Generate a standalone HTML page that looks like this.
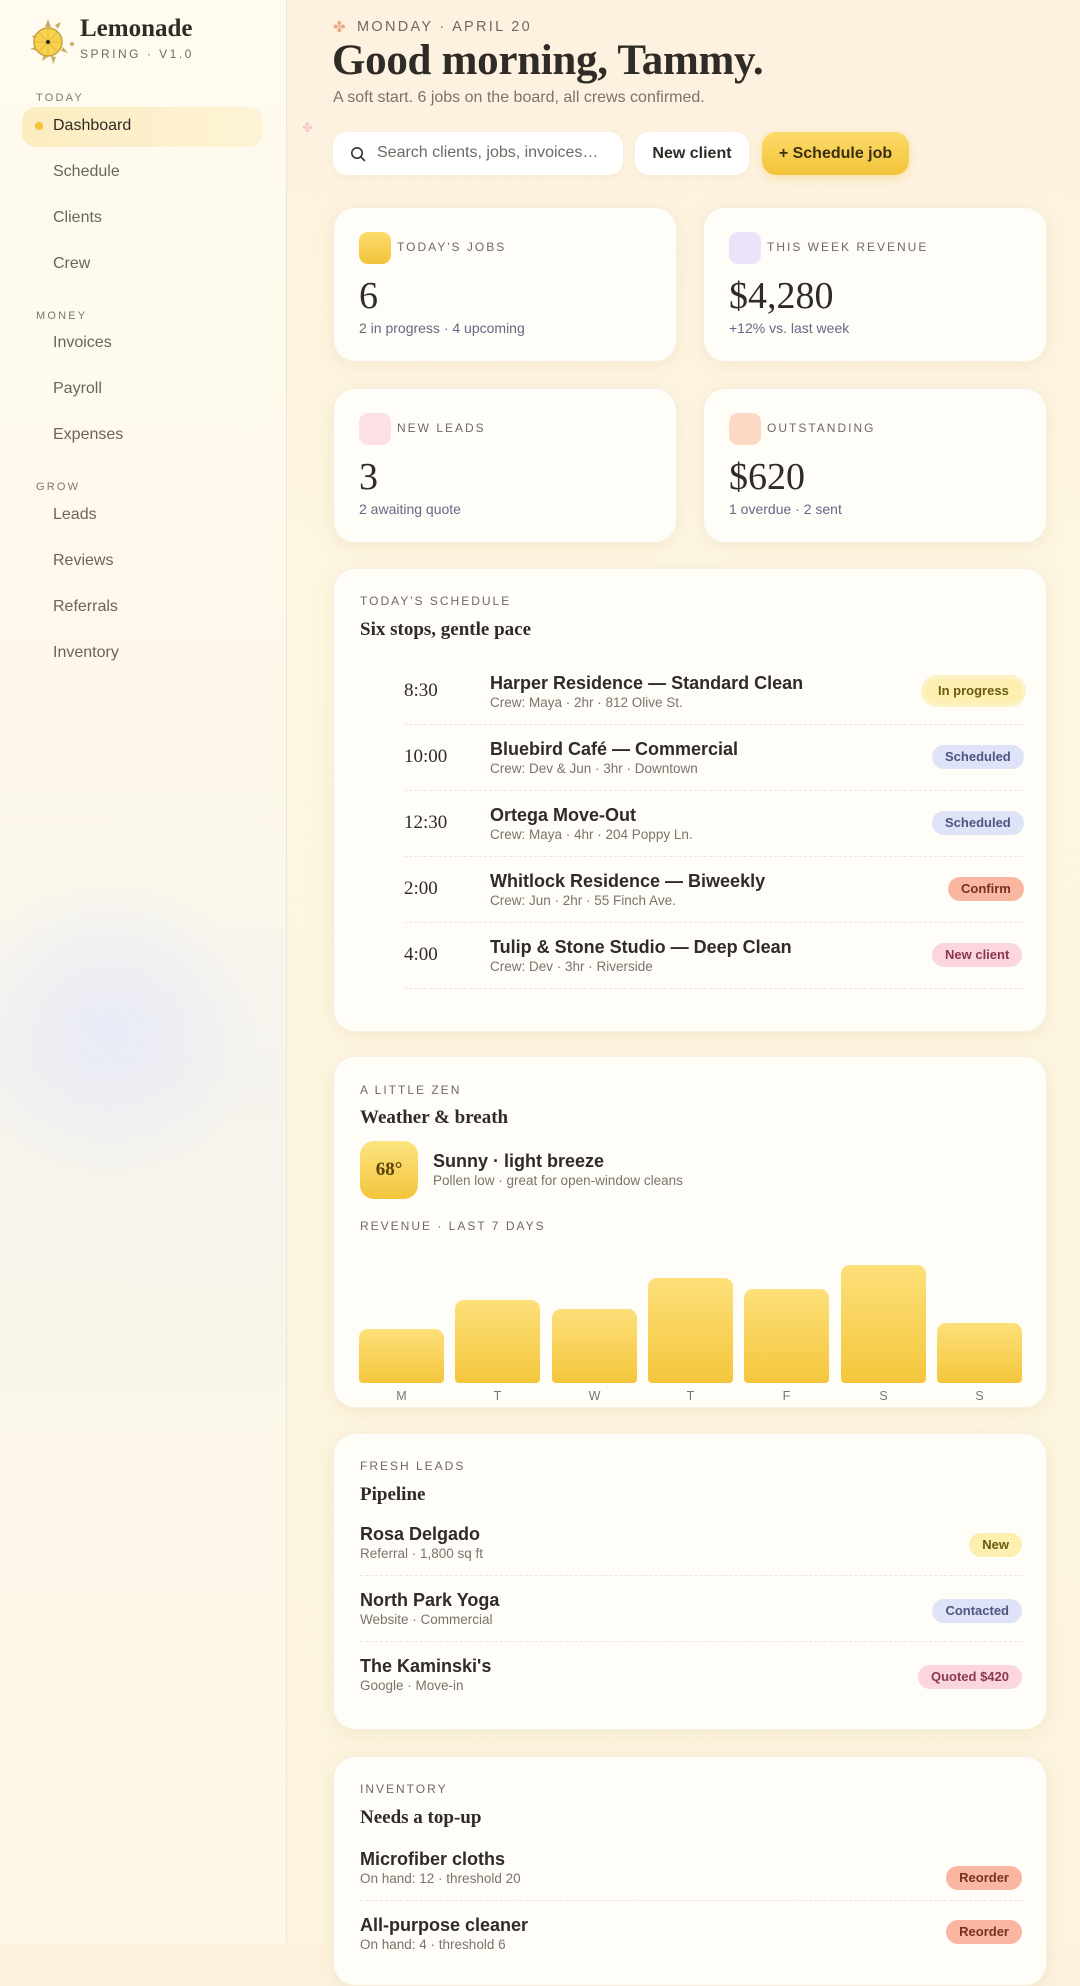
<!DOCTYPE html>
<html><head><meta charset="utf-8"><style>
*{box-sizing:border-box;margin:0;padding:0}
body{width:1080px;height:1943px;overflow:hidden;font-family:"Liberation Sans",sans-serif;color:#2f2b26;background:linear-gradient(180deg,#fdf1df 0%,#fdf6e2 30%,#fcf4de 100%);position:relative}
.side{position:absolute;left:0;top:0;width:287px;height:1943px;background:linear-gradient(180deg,#fffbee 0%,#fdf8ea 40%,#f5f3ee 55%,#fbf6e8 75%,#fdf7e6 100%);border-right:1px solid #f0e6cf}
.blob{position:absolute;left:-40px;top:880px;width:300px;height:300px;border-radius:50%;background:radial-gradient(circle,rgba(228,232,250,.8),rgba(228,232,250,0) 70%)}
.serif{font-family:"Liberation Serif",serif}
.abs{position:absolute}
.sec{position:absolute;left:36px;font-size:11px;letter-spacing:2.2px;color:#7d776c}
.nav{position:absolute;left:53px;font-size:16px;color:#6a645b;line-height:20px}
.card{position:absolute;left:333px;width:714px;background:#fffdf8;border-radius:22px;box-shadow:0 4px 16px rgba(220,200,150,.25);border:1px solid #f6efdf}
.lbl{position:absolute;left:26px;font-size:12px;letter-spacing:2px;color:#6f6a62}
.ttl{position:absolute;left:26px;font-family:"Liberation Serif",serif;font-weight:bold;font-size:19px;color:#2f2b26}
.badge{position:absolute;right:24px;height:24px;line-height:24px;padding:0 13px;border-radius:12px;font-size:13px;font-weight:bold}
.y{background:#fcefb0;color:#6b5a10}.b{background:#dfe3f7;color:#4d5680}.r{background:#f9b7a2;color:#7a2f20}.p{background:#fbd6df;color:#8a3850}
.row{position:absolute;left:26px;right:24px}
.rt{font-size:18px;font-weight:bold;color:#2f2b26;line-height:22px}
.rs{font-size:13.5px;color:#7a746b;line-height:17px}
.sep{position:absolute;height:0;border-top:1px dashed #ece6d8}
.stat{position:absolute;width:344px;height:155px;background:#fffdf8;border-radius:22px;box-shadow:0 4px 16px rgba(220,200,150,.25);border:1px solid #f6efdf}
.ic{position:absolute;left:25px;top:24px;width:32px;height:32px;border-radius:9px}
.sl{position:absolute;left:63px;top:32px;font-size:12px;letter-spacing:2px;color:#6f6a62}
.sv{position:absolute;left:25px;top:66px;font-family:"Liberation Serif",serif;font-size:38px;color:#2f2b26}
.ss{position:absolute;left:25px;top:112px;font-size:14px;color:#6b6585}
.bar{position:absolute;bottom:0;width:85px;border-radius:9px 9px 4px 4px;background:linear-gradient(180deg,#fde07a,#f4c63c)}
.dl{position:absolute;top:1389px;width:85px;text-align:center;font-size:12.5px;color:#777}
</style></head><body>
<div class="side"><div class="blob"></div>
<svg class="abs" style="left:28px;top:17px" width="50" height="50" viewBox="0 0 50 50">
<g fill="#c9ad6c"><polygon points="20,2 23,10 17,10"/><polygon points="33,5 30,12 27,8"/><polygon points="3,19 11,18 10,23"/><polygon points="2,32 10,29 10,34"/><polygon points="14,44 16,36 20,40"/><polygon points="25,47 23,39 28,40"/><polygon points="40,36 33,34 35,30"/></g>
<circle cx="20" cy="25" r="14" fill="#f6d24f" stroke="#c6a23a" stroke-width="1.5"/>
<g stroke="#e6b93a" stroke-width="1"><line x1="20" y1="12" x2="20" y2="38"/><line x1="7" y1="25" x2="33" y2="25"/><line x1="11" y1="16" x2="29" y2="34"/><line x1="29" y1="16" x2="11" y2="34"/></g>
<circle cx="20" cy="25" r="2" fill="#2f2b26"/><circle cx="44" cy="27" r="2" fill="#c9ad6c"/></svg>
<div class="abs serif" style="left:80px;top:15px;font-size:25px;font-weight:bold;color:#2f2b26">Lemonade</div>
<div class="abs" style="left:80px;top:47px;font-size:12px;letter-spacing:2.5px;color:#6f6a62">SPRING · V1.0</div>
<div class="sec" style="top:92px">TODAY</div>
<div class="abs" style="left:22px;top:107px;width:241px;height:40px;border-radius:14px;background:linear-gradient(90deg,#fcecc0,#fdf3d6)"></div>
<div class="abs" style="left:35px;top:122px;width:8px;height:8px;border-radius:50%;background:#f2c335"></div>
<div class="nav" style="top:116px;color:#2f2b26">Dashboard</div>
<div class="nav" style="top:162px">Schedule</div>
<div class="nav" style="top:208px">Clients</div>
<div class="nav" style="top:254px">Crew</div>
<div class="sec" style="top:310px">MONEY</div>
<div class="nav" style="top:333px">Invoices</div>
<div class="nav" style="top:379px">Payroll</div>
<div class="nav" style="top:425px">Expenses</div>
<div class="sec" style="top:481px">GROW</div>
<div class="nav" style="top:505px">Leads</div>
<div class="nav" style="top:551px">Reviews</div>
<div class="nav" style="top:597px">Referrals</div>
<div class="nav" style="top:643px">Inventory</div>
</div>

<div class="abs" style="left:333px;top:18px;font-size:15px;color:#eaa98a">✤</div>
<div class="abs" style="left:357px;top:19px;font-size:14.5px;letter-spacing:2.3px;color:#6f6a62">MONDAY · APRIL 20</div>
<div class="abs" style="left:302px;top:120px;font-size:13px;color:#f4c8c8">✤</div>
<div class="abs serif" style="left:332px;top:36px;font-size:43px;font-weight:bold;color:#2f2b26;letter-spacing:-.3px">Good morning, Tammy.</div>
<div class="abs" style="left:333px;top:89px;font-size:16px;color:#7a746b">A soft start. 6 jobs on the board, all crews confirmed.</div>

<div class="abs" style="left:333px;top:132px;width:290px;height:43px;border-radius:14px;background:#fff;box-shadow:0 2px 8px rgba(220,200,150,.2)">
<svg class="abs" style="left:17px;top:14px" width="16" height="16" viewBox="0 0 16 16"><circle cx="7" cy="7" r="5.2" fill="none" stroke="#333" stroke-width="1.6"/><line x1="11" y1="11" x2="14.5" y2="14.5" stroke="#333" stroke-width="1.6" stroke-linecap="round"/></svg>
<div class="abs" style="left:44px;top:12px;font-size:16px;color:#6f6a62">Search clients, jobs, invoices…</div></div>
<div class="abs" style="left:635px;top:132px;width:114px;height:43px;border-radius:14px;background:#fff;box-shadow:0 2px 8px rgba(220,200,150,.2);text-align:center;line-height:43px;font-size:16px;font-weight:bold;color:#2f2b26">New client</div>
<div class="abs" style="left:762px;top:132px;width:147px;height:43px;border-radius:14px;background:linear-gradient(180deg,#fcdb6a,#f3c33a);box-shadow:0 3px 10px rgba(240,190,60,.35);text-align:center;line-height:43px;font-size:16px;font-weight:bold;color:#3a2f10">+ Schedule job</div>

<div class="stat" style="left:333px;top:207px"><div class="ic" style="background:linear-gradient(180deg,#fcdc6c,#f3c23a)"></div><div class="sl">TODAY'S JOBS</div><div class="sv">6</div><div class="ss">2 in progress · 4 upcoming</div></div>
<div class="stat" style="left:703px;top:207px"><div class="ic" style="background:#ebe3f8"></div><div class="sl">THIS WEEK REVENUE</div><div class="sv">$4,280</div><div class="ss">+12% vs. last week</div></div>
<div class="stat" style="left:333px;top:388px"><div class="ic" style="background:#fde0e6"></div><div class="sl">NEW LEADS</div><div class="sv">3</div><div class="ss">2 awaiting quote</div></div>
<div class="stat" style="left:703px;top:388px"><div class="ic" style="background:#fdd8c2"></div><div class="sl">OUTSTANDING</div><div class="sv">$620</div><div class="ss">1 overdue · 2 sent</div></div>

<div class="card" style="top:568px;height:464px">
<div class="lbl" style="top:25px">TODAY'S SCHEDULE</div>
<div class="ttl" style="top:50px">Six stops, gentle pace</div>
</div>
<div id="sched"></div>
<!-- schedule rows -->
<div class="abs serif" style="left:404px;top:680px;font-size:19px">8:30</div>
<div class="abs" style="left:490px;top:672px"><div class="rt">Harper Residence — Standard Clean</div><div class="rs">Crew: Maya · 2hr · 812 Olive St.</div></div>
<div class="badge y abs" style="left:925px;right:auto;top:679px;box-shadow:0 0 0 4px #fdf2c6">In progress</div>
<div class="sep" style="left:404px;width:618px;top:724px"></div>
<div class="abs serif" style="left:404px;top:746px;font-size:19px">10:00</div>
<div class="abs" style="left:490px;top:738px"><div class="rt">Bluebird Café — Commercial</div><div class="rs">Crew: Dev &amp; Jun · 3hr · Downtown</div></div>
<div class="badge b abs" style="left:932px;right:auto;top:745px">Scheduled</div>
<div class="sep" style="left:404px;width:618px;top:790px"></div>
<div class="abs serif" style="left:404px;top:812px;font-size:19px">12:30</div>
<div class="abs" style="left:490px;top:804px"><div class="rt">Ortega Move-Out</div><div class="rs">Crew: Maya · 4hr · 204 Poppy Ln.</div></div>
<div class="badge b abs" style="left:932px;right:auto;top:811px">Scheduled</div>
<div class="sep" style="left:404px;width:618px;top:856px"></div>
<div class="abs serif" style="left:404px;top:878px;font-size:19px">2:00</div>
<div class="abs" style="left:490px;top:870px"><div class="rt">Whitlock Residence — Biweekly</div><div class="rs">Crew: Jun · 2hr · 55 Finch Ave.</div></div>
<div class="badge r abs" style="left:948px;right:auto;top:877px">Confirm</div>
<div class="sep" style="left:404px;width:618px;top:922px"></div>
<div class="abs serif" style="left:404px;top:944px;font-size:19px">4:00</div>
<div class="abs" style="left:490px;top:936px"><div class="rt">Tulip &amp; Stone Studio — Deep Clean</div><div class="rs">Crew: Dev · 3hr · Riverside</div></div>
<div class="badge p abs" style="left:932px;right:auto;top:943px">New client</div>
<div class="sep" style="left:404px;width:618px;top:988px"></div>

<div class="card" style="top:1056px;height:352px">
<div class="lbl" style="top:26px">A LITTLE ZEN</div>
<div class="ttl" style="top:50px">Weather &amp; breath</div>
<div class="abs serif" style="left:26px;top:84px;width:58px;height:58px;border-radius:14px;background:linear-gradient(180deg,#fde480,#f3c53c);text-align:center;line-height:58px;font-size:19px;font-weight:bold;color:#5a4208">68°</div>
<div class="abs" style="left:99px;top:94px;font-size:18px;font-weight:bold">Sunny · light breeze</div>
<div class="abs" style="left:99px;top:116px;font-size:13.5px;color:#7a746b">Pollen low · great for open-window cleans</div>
<div class="lbl" style="top:162px">REVENUE · LAST 7 DAYS</div>
</div>
<div class="abs" style="left:359px;top:1200px;width:663px;height:183px">
<div class="bar" style="left:0;height:54px"></div>
<div class="bar" style="left:96px;height:83px"></div>
<div class="bar" style="left:193px;height:74px"></div>
<div class="bar" style="left:289px;height:105px"></div>
<div class="bar" style="left:385px;height:94px"></div>
<div class="bar" style="left:482px;height:118px"></div>
<div class="bar" style="left:578px;height:60px"></div>
</div>
<div class="dl" style="left:359px">M</div><div class="dl" style="left:455px">T</div><div class="dl" style="left:552px">W</div><div class="dl" style="left:648px">T</div><div class="dl" style="left:744px">F</div><div class="dl" style="left:841px">S</div><div class="dl" style="left:937px">S</div>

<div class="card" style="top:1433px;height:297px">
<div class="lbl" style="top:25px">FRESH LEADS</div>
<div class="ttl" style="top:50px">Pipeline</div>
<div class="row" style="top:89px"><div class="rt">Rosa Delgado</div><div class="rs">Referral · 1,800 sq ft</div></div>
<div class="badge y" style="top:99px">New</div>
<div class="sep" style="left:26px;right:24px;top:141px"></div>
<div class="row" style="top:155px"><div class="rt">North Park Yoga</div><div class="rs">Website · Commercial</div></div>
<div class="badge b" style="top:165px">Contacted</div>
<div class="sep" style="left:26px;right:24px;top:207px"></div>
<div class="row" style="top:221px"><div class="rt">The Kaminski's</div><div class="rs">Google · Move-in</div></div>
<div class="badge p" style="top:231px">Quoted $420</div>
</div>

<div class="card" style="top:1756px;height:230px">
<div class="lbl" style="top:25px">INVENTORY</div>
<div class="ttl" style="top:50px">Needs a top-up</div>
<div class="row" style="top:91px"><div class="rt">Microfiber cloths</div><div class="rs">On hand: 12 · threshold 20</div></div>
<div class="badge r" style="top:109px">Reorder</div>
<div class="sep" style="left:26px;right:24px;top:143px"></div>
<div class="row" style="top:157px"><div class="rt">All-purpose cleaner</div><div class="rs">On hand: 4 · threshold 6</div></div>
<div class="badge r" style="top:163px">Reorder</div>
</div>
</body></html>
